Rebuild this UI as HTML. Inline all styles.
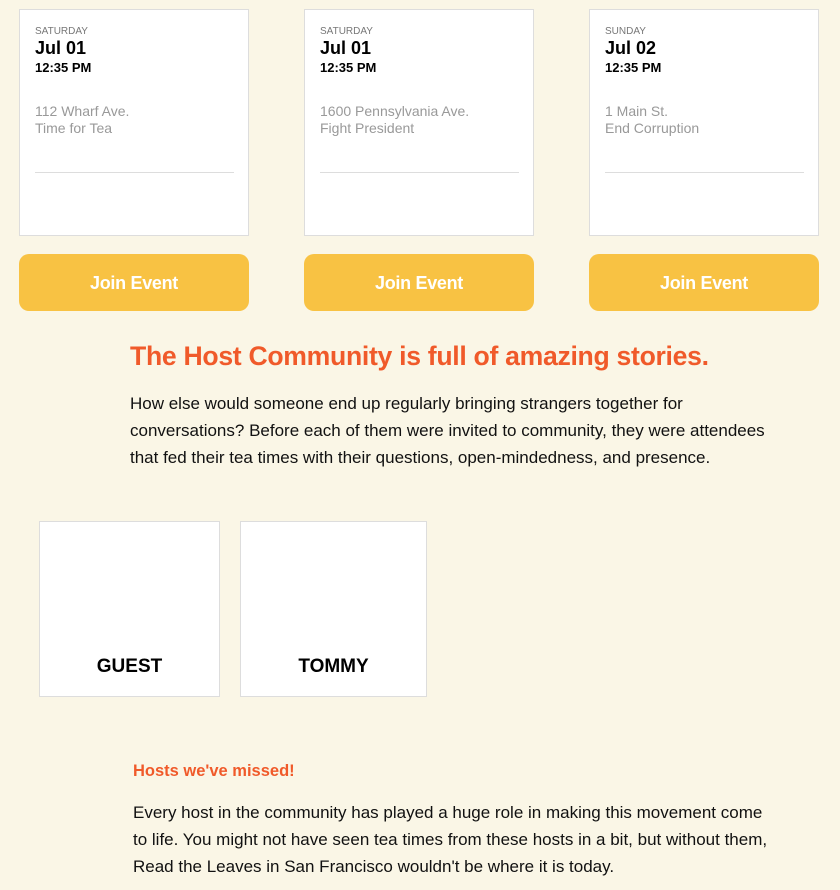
<!DOCTYPE html>
<html><head><style>
body{margin:0;background:#faf6e6;font-family:"Liberation Sans",Arial,sans-serif;width:840px;height:890px;overflow:hidden;position:relative}
.card{position:absolute;top:9px;width:228px;height:225px;background:#fff;border:1px solid #ddd}
.card .d{position:absolute;left:15px;top:16px;font-size:10px;color:#777}
.card .m{position:absolute;left:15px;top:28px;font-size:18px;font-weight:bold;color:#000}
.card .t{position:absolute;left:15px;top:50px;font-size:13px;font-weight:bold;color:#000}
.card .a{position:absolute;left:15px;top:93px;font-size:14px;color:#999;line-height:17px}
.card .l{position:absolute;left:15px;right:14px;top:162px;border-top:1px solid #ddd}
.btn{position:absolute;top:254px;width:230px;height:57px;background:#f8c243;border-radius:10px;color:#fff;font-weight:bold;font-size:18px;text-align:center;line-height:59px;letter-spacing:-0.3px}
h1{position:absolute;left:130px;top:341px;margin:0;font-size:26.6px;color:#f05a2a;letter-spacing:-0.3px}
.p{position:absolute;color:#111;font-size:17px;line-height:27px}
.pr{position:absolute;top:521px;height:174px;background:#fff;border:1px solid #ddd;text-align:center;font-weight:bold;font-size:19px}
.pr span{position:absolute;left:0;right:0;top:134px}
h2{position:absolute;left:133px;top:762px;margin:0;font-size:16.5px;color:#f05a2a}
</style></head><body>
<div class="card" style="left:19px"><div class="d">SATURDAY</div><div class="m">Jul 01</div><div class="t">12:35 PM</div><div class="a">112 Wharf Ave.<br>Time for Tea</div><div class="l"></div></div>
<div class="card" style="left:304px"><div class="d">SATURDAY</div><div class="m">Jul 01</div><div class="t">12:35 PM</div><div class="a">1600 Pennsylvania Ave.<br>Fight President</div><div class="l"></div></div>
<div class="card" style="left:589px"><div class="d">SUNDAY</div><div class="m">Jul 02</div><div class="t">12:35 PM</div><div class="a">1 Main St.<br>End Corruption</div><div class="l"></div></div>
<div class="btn" style="left:19px">Join Event</div>
<div class="btn" style="left:304px">Join Event</div>
<div class="btn" style="left:589px">Join Event</div>
<h1>The Host Community is full of amazing stories.</h1>
<div class="p" style="left:130px;top:390px;width:660px">How else would someone end up regularly bringing strangers together for<br>conversations? Before each of them were invited to community, they were attendees<br>that fed their tea times with their questions, open-mindedness, and presence.</div>
<div class="pr" style="left:39px;width:179px"><span>GUEST</span></div>
<div class="pr" style="left:240px;width:185px"><span>TOMMY</span></div>
<h2>Hosts we've missed!</h2>
<div class="p" style="left:133px;top:799px;width:660px">Every host in the community has played a huge role in making this movement come<br>to life. You might not have seen tea times from these hosts in a bit, but without them,<br>Read the Leaves in San Francisco wouldn't be where it is today.</div>
</body></html>
